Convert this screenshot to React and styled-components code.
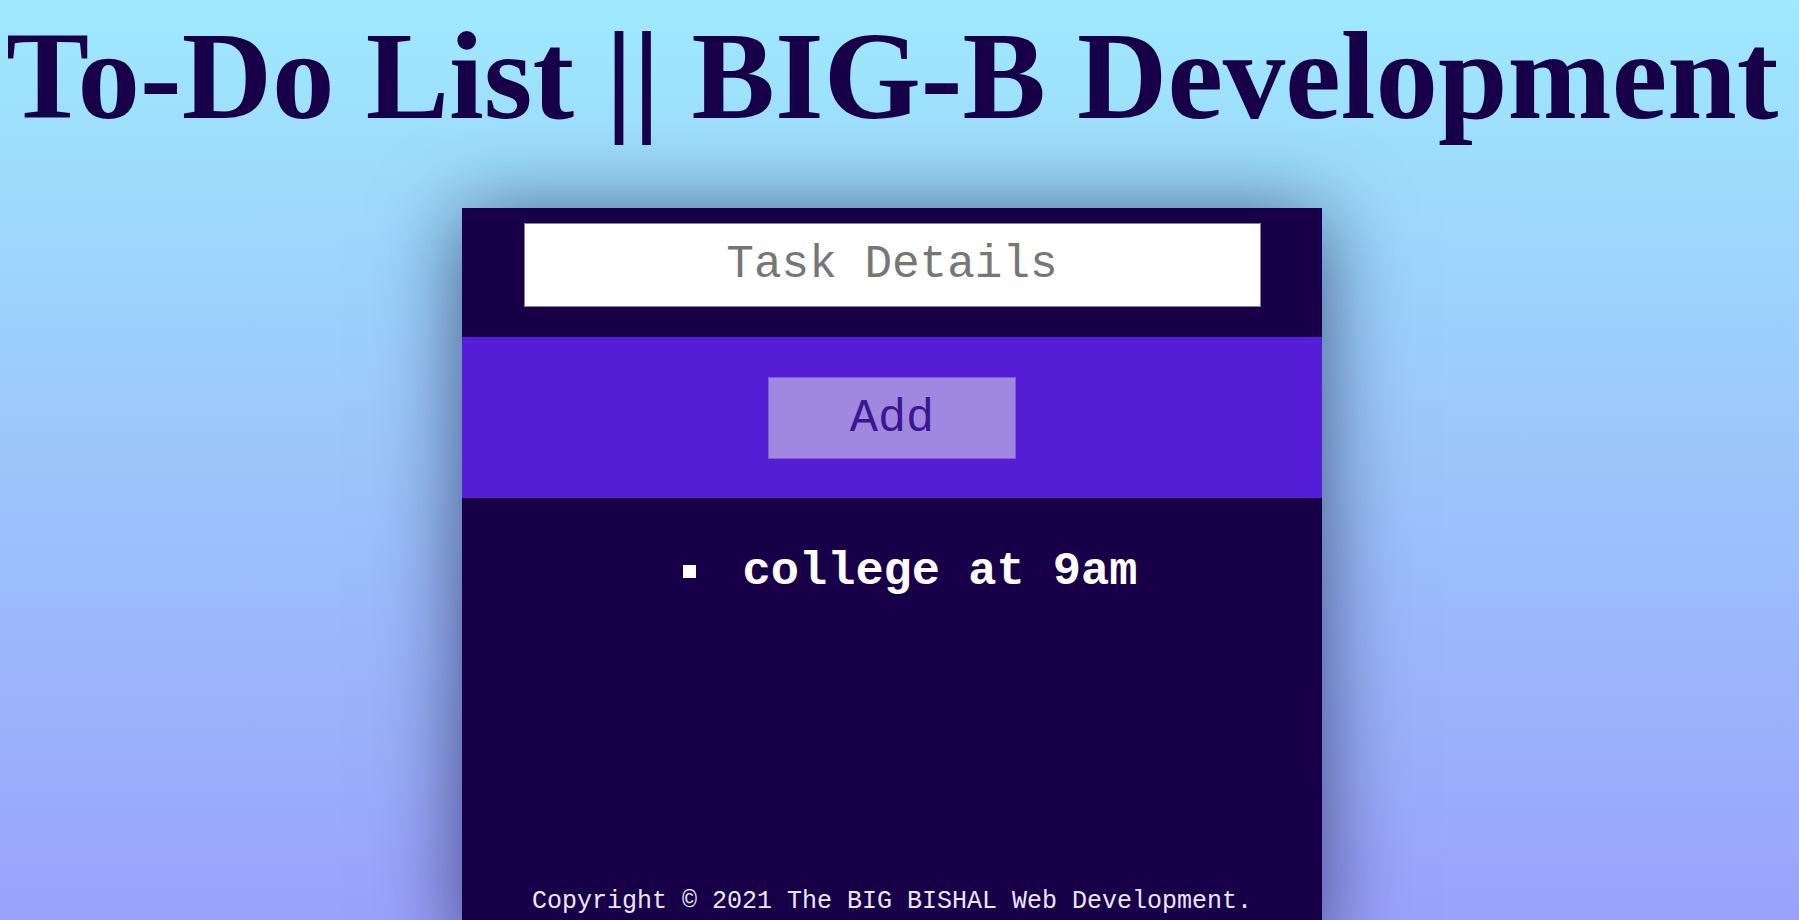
import React from 'react'
import styled, { createGlobalStyle } from 'styled-components'

const GlobalStyle = createGlobalStyle`
  html {
    overflow: hidden;
    min-height: 100%;
    background: linear-gradient(to bottom, #9ee9fd 0%, #9aa2fb 100%) fixed;
  }
  body {
    margin: 8px;
    font-family: "Liberation Serif", "Times New Roman", serif;
  }
`

const Page = styled.div`
  margin-right: 15px;
  display: flex;
  flex-direction: column;
  align-items: center;
`

const Title = styled.h1`
  margin: 0;
  font-family: "Liberation Serif", "Times New Roman", serif;
  font-size: 125px;
  line-height: 137px;
  font-weight: bold;
  color: #180049;
  text-align: center;
  white-space: nowrap;
`

const Card = styled.div`
  margin-top: 63px;
  width: 860px;
  display: flex;
  flex-direction: column;
  background-color: #180049;
  box-shadow: 0 8px 80px rgba(10, 10, 50, 0.62);
  font-family: "Liberation Mono", "Courier New", monospace;
`

const InputBar = styled.div`
  display: flex;
  justify-content: center;
  padding: 15px 0 30px;
`

const TaskInput = styled.input`
  box-sizing: border-box;
  width: 737px;
  height: 84px;
  border: 1px solid #8a7e96;
  background: #fff;
  font-family: "Liberation Mono", "Courier New", monospace;
  font-size: 46px;
  text-align: center;
  outline: none;
  &::placeholder {
    color: #767676;
  }
`

const ButtonBar = styled.div`
  display: flex;
  justify-content: center;
  padding: 40px 0 39px;
  background-color: #551dd5;
`

const AddButton = styled.button`
  box-sizing: border-box;
  width: 248px;
  height: 82px;
  border: 1px solid #7c62c8;
  background-color: #a088e0;
  color: #3a1790;
  font-family: "Liberation Mono", "Courier New", monospace;
  font-size: 47px;
  cursor: pointer;
`

const ListArea = styled.div`
  display: flex;
  flex-direction: column;
  padding: 48px 0 30px;
`

const TaskList = styled.ul`
  margin: 0;
  padding: 0 0 0 36px;
  list-style: none;
  text-align: center;
`

const TaskItem = styled.li`
  color: #ffffff;
  font-size: 47px;
  font-weight: bold;
  line-height: 52px;
  &::before {
    content: "";
    display: inline-block;
    width: 13px;
    height: 13px;
    margin: 0 47px 6px 0;
    background: #ffffff;
  }
`

const Footer = styled.p`
  margin: 290px 0 0;
  color: #ece6ff;
  font-size: 25px;
  line-height: 28px;
  text-align: center;
`

const tasks = ['college at 9am']

export default function App() {
  return (
    <>
      <GlobalStyle />
      <Page>
        <Title>To-Do List || BIG-B Development</Title>
        <Card>
          <InputBar>
            <TaskInput placeholder="Task Details" />
          </InputBar>
          <ButtonBar>
            <AddButton>Add</AddButton>
          </ButtonBar>
          <ListArea>
            <TaskList>
              {tasks.map((t) => (
                <TaskItem key={t}>{t}</TaskItem>
              ))}
            </TaskList>
            <Footer>Copyright © 2021 The BIG BISHAL Web Development.</Footer>
          </ListArea>
        </Card>
      </Page>
    </>
  )
}
